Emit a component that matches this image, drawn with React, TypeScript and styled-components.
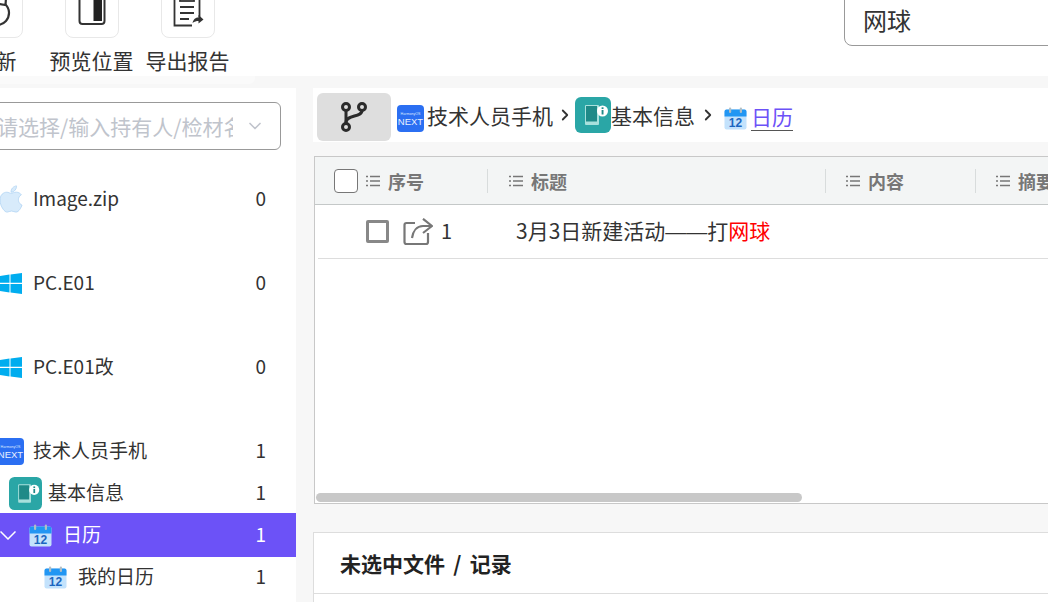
import React from 'react';
import styled, { createGlobalStyle } from 'styled-components';
import { FaApple } from 'react-icons/fa';
import { ChevronDown, ChevronRight } from 'lucide-react';

const GlobalStyle = createGlobalStyle`
  html, body { margin: 0; padding: 0; }
  body {
    width: 1048px;
    height: 602px;
    overflow: hidden;
    background: #f7f7f7;
    font-family: "Noto Sans CJK SC", "Noto Sans", sans-serif;
    color: #333;
  }
`;

const Page = styled.div`
  width: 1048px;
  height: 602px;
  overflow: hidden;
  display: flex;
  flex-direction: column;
`;

const Toolbar = styled.div`
  height: 76px;
  flex-shrink: 0;
  background: #fff;
  display: flex;
  align-items: flex-start;
  overflow: hidden;
`;

const ToolbarShelf = styled.div`
  width: 255px;
  height: 8px;
  margin-bottom: 4px;
  flex-shrink: 0;
  background: #fafafa;
  border-bottom-right-radius: 6px;
`;

const ToolGroup = styled.div`
  display: flex;
  flex-shrink: 0;
  margin-left: -52.5px;
`;

const Tool = styled.div`
  width: 96px;
  display: flex;
  flex-direction: column;
  align-items: center;
  margin-top: -16px;
`;

const ToolButton = styled.div`
  width: 54px;
  height: 54px;
  border: 1px solid #e8e8e8;
  border-radius: 8px;
  display: flex;
  align-items: flex-end;
  justify-content: center;
  padding-bottom: 11px;
  box-sizing: border-box;
`;

const ToolLabel = styled.div`
  margin-top: 8px;
  font-size: 21px;
  line-height: 28px;
  white-space: nowrap;
  color: #333;
`;

const SearchBox = styled.div`
  width: 300px;
  height: 57px;
  flex-shrink: 0;
  margin: -11px 0 0 608.5px;
  box-sizing: border-box;
  border: 1px solid #999;
  border-radius: 8px;
  display: flex;
  align-items: center;
  padding: 4px 0 0 18px;
  font-size: 24px;
  color: #333;
`;

const Body = styled.div`
  flex: 1;
  display: flex;
  min-height: 0;
`;

const Sidebar = styled.aside`
  width: 296px;
  flex-shrink: 0;
  background: #fff;
  overflow: hidden;
  padding-top: 14px;
  margin-right: 17px;
`;

const SourceSelect = styled.div`
  margin-left: -30px;
  width: 311px;
  height: 48px;
  box-sizing: border-box;
  border: 1px solid #999;
  border-radius: 6px;
  display: flex;
  align-items: center;
  padding: 0 15px 0 26px;
  color: #c0c4cc;
  font-size: 21px;
  white-space: nowrap;
`;

const SelectText = styled.span`
  flex: 1;
  overflow: hidden;
  margin-right: 12px;
`;

const SourceList = styled.div`
  margin: 28px 0 0 -30px;
`;

const Row = styled.div<{ $level: number; $tall?: boolean; $active?: boolean }>`
  height: ${p => (p.$active ? '44px' : '42px')};
  margin: ${p => (p.$active ? '-1px 0' : '0')};
  display: flex;
  align-items: center;
  padding: 0 30px ${p => (p.$tall ? '42px' : '0')} ${p => 18 + p.$level * 15}px;
  background: ${p => (p.$active ? '#6c52f7' : 'transparent')};
  color: ${p => (p.$active ? '#fff' : '#333')};
  font-size: 19px;
`;

const Caret = styled.span`
  width: 16px;
  margin: 0 2px 0 -18px;
  display: flex;
  flex-shrink: 0;
`;

const IconSlot = styled.span`
  width: 45px;
  flex-shrink: 0;
  display: flex;
  justify-content: center;
  align-items: center;
`;

const RowName = styled.span`
  flex: 1;
  white-space: nowrap;
  padding-bottom: 4px;
`;

const RowCount = styled.span`
  font-size: 19px;
  padding-bottom: 4px;
`;

const Main = styled.main`
  flex: 1;
  min-width: 0;
  display: flex;
  flex-direction: column;
`;

const Crumbs = styled.nav`
  height: 54px;
  flex-shrink: 0;
  background: #fff;
  display: flex;
  align-items: center;
  padding-left: 4px;
  font-size: 21px;
  white-space: nowrap;
`;

const BranchButton = styled.div`
  width: 74px;
  height: 48px;
  margin: 4px 6px 0 0;
  background: #dedede;
  border-radius: 6px;
  display: flex;
  align-items: center;
  justify-content: center;
`;

const CrumbIcon = styled.span<{ $drop?: number }>`
  display: flex;
  flex-shrink: 0;
  margin-top: ${p => p.$drop ?? 0}px;
`;

const CrumbText = styled.span<{ $inset?: number }>`
  color: #333;
  margin-left: ${p => p.$inset ?? 0}px;
  padding-bottom: 1px;
`;

const CrumbLink = styled.span`
  color: #6c52f7;
  margin: 2px 0 0 4px;
  line-height: 28px;
  border-bottom: 1px solid #555;
`;

const CrumbArrow = styled.span<{ $before: number; $after: number }>`
  display: flex;
  margin: 0 ${p => p.$after}px 0 ${p => p.$before}px;
  color: #333;
`;

const TablePanel = styled.section`
  height: 348px;
  flex-shrink: 0;
  margin: 14px 0 0 1px;
  box-sizing: border-box;
  background: #fff;
  border: 1px solid #c8c8c8;
  border-right: 0;
  display: flex;
  flex-direction: column;
  overflow: hidden;
`;

const HeaderRow = styled.div`
  height: 48px;
  flex-shrink: 0;
  box-sizing: border-box;
  background: #f3f5f5;
  border-bottom: 1px solid #c4c8c8;
  display: flex;
  align-items: center;
`;

const HeaderCell = styled.div<{ $width: number; $inset: number; $divider?: boolean }>`
  width: ${p => p.$width}px;
  flex-shrink: 0;
  height: 24px;
  box-sizing: border-box;
  display: flex;
  align-items: center;
  gap: 7px;
  padding-left: ${p => p.$inset}px;
  border-right: ${p => (p.$divider ? '1px solid #d8dcdc' : '0')};
  font-size: 18px;
  font-weight: 700;
  color: #777;
  white-space: nowrap;
`;

const HeadCheck = styled.span`
  width: 24px;
  height: 24px;
  box-sizing: border-box;
  border: 1px solid #777;
  border-radius: 4px;
  background: #fff;
`;

const DataRow = styled.div`
  height: 54px;
  flex-shrink: 0;
  box-sizing: border-box;
  margin-left: 3px;
  border-bottom: 1px solid #ddd;
  display: flex;
  align-items: center;
  font-size: 21px;
  color: #333;
`;

const RowCheck = styled.span`
  width: 23px;
  height: 23px;
  box-sizing: border-box;
  border: 3px solid #888;
  border-radius: 2px;
  margin: 0 14px 0 48px;
`;

const RowIndex = styled.span`
  width: 75px;
  margin-left: 8px;
  flex-shrink: 0;
  font-size: 20px;
  padding-bottom: 3px;
`;

const RowTitle = styled.span`
  padding-bottom: 3px;
`;

const DashRun = styled.span`
  font-family: "Liberation Sans", sans-serif;
`;

const Highlight = styled.span`
  color: #f00;
`;

const TableSpacer = styled.div`
  flex: 1;
`;

const ScrollThumb = styled.div`
  width: 486px;
  height: 9px;
  margin: 0 0 1px 1px;
  flex-shrink: 0;
  background: #c8c8c8;
  border-radius: 5px;
`;

const DetailPanel = styled.section`
  flex: 1;
  margin-top: 28px;
  background: #fff;
  border-top: 1px solid #ddd;
  border-left: 1px solid #ddd;
`;

const DetailTitle = styled.div`
  height: 61px;
  box-sizing: border-box;
  border-bottom: 1px solid #ddd;
  padding-left: 26px;
  display: flex;
  align-items: center;
  font-size: 21px;
  font-weight: 700;
  word-spacing: 3.5px;
  color: #222;
`;

const ListGlyph = () => (
  <svg width="16" height="14" viewBox="0 0 16 14" fill="none" stroke="#777" strokeWidth="1.6">
    <path d="M5 2.5h10M5 7h10M5 11.5h10" />
    <path d="M1 2.5h2M1 7h2M1 11.5h2" />
  </svg>
);

const RefreshGlyph = () => (
  <svg width="32" height="40" viewBox="0 0 32 40" fill="none" stroke="#333" strokeWidth="2.2" style={{ overflow: 'visible' }}>
    <path d="M25 18A12 12 0 1 1 8 19" />
    <path d="M26 12l-.5 7-6.5-1" />
  </svg>
);

const PreviewGlyph = () => (
  <svg width="32" height="40" viewBox="0 0 32 40" style={{ overflow: 'visible' }}>
    <rect x="3.5" y="0" width="25" height="38" rx="3" fill="#fff" stroke="#333" strokeWidth="2" />
    <rect x="17.5" y="8" width="8.5" height="27" fill="#222" />
  </svg>
);

const ReportGlyph = () => (
  <svg width="32" height="40" viewBox="0 0 32 40" fill="none" stroke="#333" strokeWidth="1.8" style={{ overflow: 'visible' }}>
    <path d="M27.5 31V2H2.5v37.5H20" />
    <rect x="8" y="8" width="14" height="7" />
    <path d="M8 21h14M8 27h14M8 33h9" />
    <path d="M20.5 37c1-4 3-5.5 6-5.5V29l5 4.5-5 4V35c-2 0-4 .5-6 2z" fill="#333" stroke="none" />
  </svg>
);

const BranchGlyph = () => (
  <svg width="28" height="32" viewBox="0 0 28 32" fill="none" stroke="#2b2b2b" strokeWidth="3">
    <circle cx="6" cy="6" r="3.5" />
    <circle cx="22" cy="6" r="3.5" />
    <circle cx="6" cy="26" r="3.5" />
    <path d="M6 9.5v13" />
    <path d="M22 9.5c0 7-16 4-16 12" />
  </svg>
);

const CalendarIcon = () => (
  <svg width="23" height="23" viewBox="0 0 23 23">
    <rect x="0.5" y="2.5" width="22" height="20" rx="2" fill="#c3e2fc" />
    <path d="M0.5 9.5V4.5a2 2 0 0 1 2-2h18a2 2 0 0 1 2 2v5z" fill="#2196f3" />
    <rect x="5" y="0.5" width="2.2" height="5.5" rx="1.1" fill="#b0bec5" />
    <rect x="15.8" y="0.5" width="2.2" height="5.5" rx="1.1" fill="#b0bec5" />
    <text x="11.5" y="20" textAnchor="middle" fontSize="12" fontWeight="700" fill="#1b66c0" fontFamily="Liberation Sans, sans-serif">12</text>
  </svg>
);

const NextLogo = () => (
  <svg width="27" height="27" viewBox="0 0 27 27">
    <rect width="27" height="27" rx="4" fill="#2b6ff2" />
    <text x="13.5" y="10" textAnchor="middle" fontSize="3.6" fill="#dfe9ff" fontFamily="Liberation Sans, sans-serif">HarmonyOS</text>
    <text x="13.5" y="20" textAnchor="middle" fontSize="9.5" fill="#e8f0ff" fontFamily="Liberation Sans, sans-serif">NEXT</text>
  </svg>
);

const InfoLogo = ({ size = 33 }: { size?: number }) => (
  <svg width={size} height={size} viewBox="0 0 36 36">
    <rect width="36" height="36" rx="6" fill="#2aa6a6" />
    <rect x="10" y="8" width="14" height="20" rx="1" fill="#a8e0dc" />
    <rect x="11" y="9" width="11" height="15.5" fill="#1f8a88" />
    <circle cx="27.5" cy="14" r="5.5" fill="#fff" />
    <rect x="26.6" y="13" width="1.9" height="4.5" fill="#1f8a88" />
    <rect x="26.6" y="10.3" width="1.9" height="1.7" fill="#1f8a88" />
  </svg>
);

const ShareGlyph = () => (
  <svg width="30" height="28" viewBox="0 0 30 28" fill="none" stroke="#777" strokeWidth="2.2">
    <path d="M12 5H3.5a2 2 0 0 0-2 2v17a2 2 0 0 0 2 2H23a2 2 0 0 0 2-2v-9" />
    <path d="M20 .8L29 8l-9 7" strokeLinejoin="round" />
    <path d="M29 8h-9c-6 0-10 5-11 12" />
  </svg>
);

const WindowsIcon = () => (
  <svg width="22" height="21" viewBox="0 0 22 21" fill="#00adef">
    <path d="M0 3l9.5-1.4v8.2H0zM10.5 1.5L22 0v9.8H10.5zM0 10.9h9.5v8.5L0 18zM10.5 10.9H22V21l-11.5-1.6z" />
  </svg>
);

const AppleIcon = () => (
  <FaApple size={30} color="#d8ebfb" stroke="#a9d0f2" strokeWidth={12} />
);

const CaretDown = () => (
  <svg width="16" height="9" viewBox="0 0 16 9" fill="none" stroke="#fff" strokeWidth="1.5">
    <path d="M.5.5L8 8l7.5-7.5" />
  </svg>
);

const columns = [
  { label: '序号', width: 173, inset: 19, check: true, divider: true },
  { label: '标题', width: 338, inset: 20, divider: true },
  { label: '内容', width: 150, inset: 19, divider: true },
  { label: '摘要', width: 200, inset: 19 },
];

export default function App() {
  return (
    <Page>
      <GlobalStyle />
      <Toolbar>
        <ToolGroup>
          <Tool>
            <ToolButton><RefreshGlyph /></ToolButton>
            <ToolLabel>刷新</ToolLabel>
          </Tool>
          <Tool>
            <ToolButton><PreviewGlyph /></ToolButton>
            <ToolLabel>预览位置</ToolLabel>
          </Tool>
          <Tool>
            <ToolButton><ReportGlyph /></ToolButton>
            <ToolLabel>导出报告</ToolLabel>
          </Tool>
        </ToolGroup>
        <SearchBox>网球</SearchBox>
      </Toolbar>
      <ToolbarShelf />
      <Body>
        <Sidebar>
          <SourceSelect>
            <SelectText>请选择/输入持有人/检材名称</SelectText>
            <ChevronDown size={20} color="#c0c4cc" />
          </SourceSelect>
          <SourceList>
            <Row $level={0} $tall>
              <IconSlot><AppleIcon /></IconSlot>
              <RowName>Image.zip</RowName>
              <RowCount>0</RowCount>
            </Row>
            <Row $level={0} $tall>
              <IconSlot><WindowsIcon /></IconSlot>
              <RowName>PC.E01</RowName>
              <RowCount>0</RowCount>
            </Row>
            <Row $level={0} $tall>
              <IconSlot><WindowsIcon /></IconSlot>
              <RowName>PC.E01改</RowName>
              <RowCount>0</RowCount>
            </Row>
            <Row $level={0}>
              <IconSlot><NextLogo /></IconSlot>
              <RowName>技术人员手机</RowName>
              <RowCount>1</RowCount>
            </Row>
            <Row $level={1}>
              <Caret><ChevronRight size={16} color="#555" /></Caret>
              <IconSlot><InfoLogo /></IconSlot>
              <RowName>基本信息</RowName>
              <RowCount>1</RowCount>
            </Row>
            <Row $level={2} $active>
              <Caret><CaretDown /></Caret>
              <IconSlot><CalendarIcon /></IconSlot>
              <RowName>日历</RowName>
              <RowCount>1</RowCount>
            </Row>
            <Row $level={3}>
              <IconSlot><CalendarIcon /></IconSlot>
              <RowName>我的日历</RowName>
              <RowCount>1</RowCount>
            </Row>
          </SourceList>
        </Sidebar>
        <Main>
          <Crumbs>
            <BranchButton><BranchGlyph /></BranchButton>
            <CrumbIcon $drop={6}><NextLogo /></CrumbIcon>
            <CrumbText $inset={3}>技术人员手机</CrumbText>
            <CrumbArrow $before={3} $after={1}><ChevronRight size={18} strokeWidth={2.4} /></CrumbArrow>
            <CrumbIcon><InfoLogo size={36} /></CrumbIcon>
            <CrumbText>基本信息</CrumbText>
            <CrumbArrow $before={4} $after={7}><ChevronRight size={18} strokeWidth={2.4} /></CrumbArrow>
            <CrumbIcon $drop={6}><CalendarIcon /></CrumbIcon>
            <CrumbLink>日历</CrumbLink>
          </Crumbs>
          <TablePanel>
            <HeaderRow>
              {columns.map(col => (
                <HeaderCell key={col.label} $width={col.width} $inset={col.inset} $divider={col.divider}>
                  {col.check && <HeadCheck />}
                  <ListGlyph />
                  <span>{col.label}</span>
                </HeaderCell>
              ))}
            </HeaderRow>
            <DataRow>
              <RowCheck />
              <ShareGlyph />
              <RowIndex>1</RowIndex>
              <RowTitle>3月3日新建活动<DashRun>——</DashRun>打<Highlight>网球</Highlight></RowTitle>
            </DataRow>
            <TableSpacer />
            <ScrollThumb />
          </TablePanel>
          <DetailPanel>
            <DetailTitle>未选中文件 / 记录</DetailTitle>
          </DetailPanel>
        </Main>
      </Body>
    </Page>
  );
}
